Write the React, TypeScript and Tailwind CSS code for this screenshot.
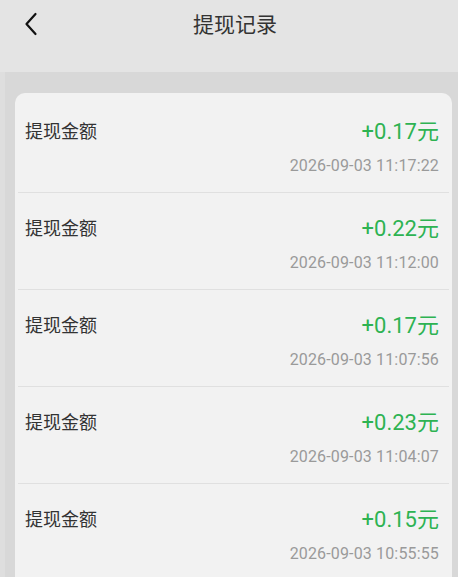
import React from "react";

const records = [
  { amount: "+0.17元", time: "2026-09-03 11:17:22" },
  { amount: "+0.22元", time: "2026-09-03 11:12:00" },
  { amount: "+0.17元", time: "2026-09-03 11:07:56" },
  { amount: "+0.23元", time: "2026-09-03 11:04:07" },
  { amount: "+0.15元", time: "2026-09-03 10:55:55" },
];

const font = { fontFamily: 'Roboto, "Noto Sans CJK SC", sans-serif' };

export default function App() {
  return (
    <div className="w-[458px] h-[577px] overflow-hidden bg-[#d8d8d8] flex flex-col" style={font}>
      <div className="h-[72px] shrink-0 bg-[#e4e4e4] relative flex items-start justify-center">
        <button className="absolute left-[21px] top-[10px] w-[20px] h-[28px] flex items-center justify-center">
          <svg width="14" height="24" viewBox="0 0 14 24" fill="none">
            <path d="M11.5 2 L2.5 12 L11.5 22" stroke="#111" strokeWidth="2.2" strokeLinecap="round" strokeLinejoin="round" />
          </svg>
        </button>
        <h1 className="mt-[11px] ml-[12px] text-[21px] leading-[28px] text-[#333] font-normal">提现记录</h1>
      </div>
      <div className="flex-1 flex pt-[21px] pr-[6px]">
        <div className="w-[5px] shrink-0 bg-[#dedede] -mt-[21px]" />
        <div className="w-[10px] shrink-0" />
        <div className="flex-1 bg-[#f2f2f2] rounded-t-[10px] flex flex-col pt-[3px]">
          {records.map((r, i) => (
            <div key={i} className="h-[97px] shrink-0 px-[3px] flex flex-col">
              <div className="flex-1 flex justify-between pl-[7px] pr-[10px] pt-[22px]">
                <div className="text-[18px] leading-[28px] text-[#333]">提现金额</div>
                <div className="flex flex-col items-end">
                  <div className="text-[22px] leading-[28px] text-[#2eb352]">{r.amount}</div>
                  <div className="mt-[10px] text-[16px] leading-[20px] tracking-[0.15px] text-[#9a9a9a]">{r.time}</div>
                </div>
              </div>
              <div className="h-px bg-[#e0e0e0]" />
            </div>
          ))}
        </div>
      </div>
    </div>
  );
}
